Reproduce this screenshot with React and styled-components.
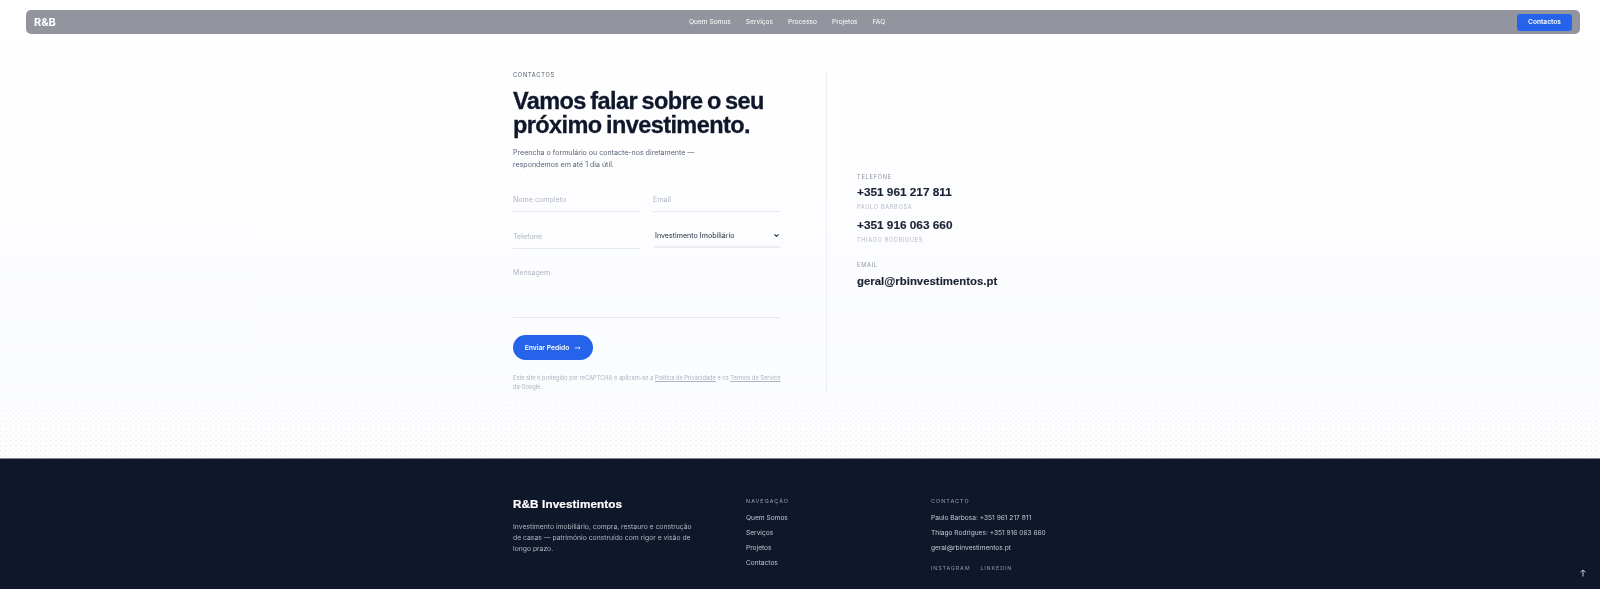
import styled, { createGlobalStyle } from "styled-components";
import { ChevronDown } from "lucide-react";

const GlobalStyle = createGlobalStyle`
  * { box-sizing: border-box; }
  html, body { margin: 0; padding: 0; background: #fff; }
  body { font-family: Inter, "Liberation Sans", sans-serif; color: #0f172a; }
`;

const Page = styled.div`
  position: relative;
  width: 100%;
  height: 589px;
  overflow: hidden;
  display: flex;
  flex-direction: column;
  filter: blur(0.3px);
`;

const Main = styled.main`
  position: relative;
  height: 458px;
  padding-top: 10px;
  background-color: #fff;
  background-image: linear-gradient(180deg, #fff 0%, #fbfcfe 80%, rgba(251, 252, 254, 0.25) 100%),
    radial-gradient(circle at 1px 1px, #e4e7ed 0.6px, transparent 0.9px),
    radial-gradient(circle at 3.5px 3.5px, #e9ecf1 0.6px, transparent 0.9px);
  background-size: 100% 100%, 5px 5px, 5px 5px;
`;

const Nav = styled.nav`
  position: relative;
  height: 24px;
  margin: 0 20px 0 26px;
  padding: 0 8px;
  display: flex;
  align-items: center;
  justify-content: space-between;
  background: #93959e;
  border-radius: 5px;
`;

const Logo = styled.span`
  font-size: 11px;
  font-weight: 700;
  color: #fff;
`;

const NavLinks = styled.div`
  position: absolute;
  left: 663px;
  display: flex;
  gap: 15px;
`;

const NavLink = styled.a`
  font-size: 6.6px;
  font-weight: 400;
  color: #fff;
`;

const NavButton = styled.button`
  width: 55px;
  height: 17px;
  padding: 0;
  border: none;
  border-radius: 3px;
  background: #2563eb;
  color: #fff;
  font-family: inherit;
  font-size: 6.6px;
  font-weight: 600;
`;

const Content = styled.div`
  width: 574px;
  margin: 36px auto 0 513px;
  display: flex;
`;

const FormCol = styled.section`
  width: 314px;
  height: 322px;
  padding: 2px 46px 0 0;
  border-right: 1px solid #eceef2;
`;

const Eyebrow = styled.div`
  font-size: 5.6px;
  font-weight: 400;
  letter-spacing: 0.14em;
  color: #4b5565;
  text-transform: uppercase;
`;

const Title = styled.h1`
  margin: 12px 0 0;
  font-family: "Liberation Sans", Arial, sans-serif;
  font-size: 23.5px;
  line-height: 23.5px;
  font-weight: 700;
  letter-spacing: -0.025em;
  word-spacing: -1.5px;
  -webkit-text-stroke: 0.3px #0f172a;
  color: #0f172a;
  white-space: nowrap;
`;

const Lead = styled.p`
  margin: 10px 0 0;
  width: 200px;
  font-size: 7.05px;
  line-height: 12px;
  color: #5b6478;
`;

const FormGrid = styled.form`
  margin-top: 17px;
  display: grid;
  grid-template-columns: 1fr 1fr;
  column-gap: 13px;
`;

const fieldBase = `
  width: 100%;
  border: none;
  outline: none;
  background: transparent;
  font-family: Inter, "Liberation Sans", sans-serif;
  font-size: 7.1px;
  color: #0f172a;
  border-bottom: 1px solid #e5e7eb;
  padding: 0;
  &::placeholder { color: #b0b5c3; opacity: 1; }
`;

const Input = styled.input`
  ${fieldBase}
  height: 24px;
  margin-bottom: 13px;
`;

const SelectWrap = styled.div`
  position: relative;
  height: 23px;
  margin-top: -3px;
  svg {
    position: absolute;
    right: 0;
    top: 10px;
    width: 7px;
    height: 7px;
    color: #1f2937;
    stroke-width: 3.5;
    pointer-events: none;
  }
`;

const Select = styled.select`
  ${fieldBase}
  height: 23px;
  padding-left: 2px;
  appearance: none;
  border-bottom: 2px solid #eceef2;
  color: #1f2937;
`;

const TextArea = styled.textarea`
  ${fieldBase}
  grid-column: 1 / -1;
  height: 57px;
  margin-top: -1px;
  padding-top: 7px;
  resize: none;
  display: block;
`;

const Submit = styled.button`
  margin-top: 17px;
  width: 80px;
  height: 25px;
  padding: 0;
  border: none;
  border-radius: 13px;
  background: #2563eb;
  color: #fff;
  font-family: inherit;
  font-size: 6.75px;
  font-weight: 600;
  display: flex;
  align-items: center;
  justify-content: center;
  gap: 5px;
`;

const Captcha = styled.p`
  margin: 14px 0 0;
  font-size: 5.66px;
  line-height: 9px;
  color: #aeb3c1;
  white-space: nowrap;

  a {
    color: inherit;
    text-decoration: underline;
  }
`;

const InfoCol = styled.aside`
  padding: 103px 0 0 30px;
`;

const InfoLabel = styled.div`
  font-size: 5.6px;
  font-weight: 400;
  letter-spacing: 0.14em;
  line-height: 8px;
  color: #8a91a1;
  text-transform: uppercase;
  margin-top: ${(p) => p.$top || 0}px;
`;

const InfoValue = styled.div`
  margin-top: ${(p) => p.$gap}px;
  font-family: "Liberation Sans", Arial, sans-serif;
  font-size: ${(p) => p.$size}px;
  line-height: 16px;
  font-weight: 700;
  -webkit-text-stroke: 0.15px #1a2236;
  color: #1a2236;
  white-space: nowrap;
`;

const InfoName = styled.div`
  margin: 3px 0 2px;
  font-size: 5.6px;
  line-height: 8px;
  letter-spacing: 0.12em;
  color: #b3b8c5;
  text-transform: uppercase;
`;

const Footer = styled.footer`
  height: 131px;
  background: #0f172a;
  border-top: 1px solid #7d828e;
`;

const FooterGrid = styled.div`
  width: 574px;
  margin-left: 513px;
  padding-top: 38px;
  display: flex;
`;

const FooterBrand = styled.div`
  width: 233px;
`;

const BrandName = styled.div`
  font-family: "Liberation Sans", Arial, sans-serif;
  font-size: 11.7px;
  line-height: 14px;
  font-weight: 700;
  letter-spacing: 0.01em;
  -webkit-text-stroke: 0.2px #fff;
  color: #fff;
`;

const BrandText = styled.p`
  margin: 10px 0 0;
  width: 180px;
  font-size: 6.8px;
  line-height: 11px;
  color: #aeb4c0;
`;

const FooterNav = styled.div`
  width: 185px;
`;

const FooterHead = styled.div`
  font-size: 5.4px;
  line-height: 8px;
  letter-spacing: 0.2em;
  color: #99a0ae;
  text-transform: uppercase;
`;

const FooterList = styled.div`
  margin-top: 8px;
  display: flex;
  flex-direction: column;
  gap: 4px;
`;

const FooterLink = styled.a`
  font-size: 6.6px;
  line-height: 11px;
  color: #c3c8d2;
  white-space: nowrap;
`;

const Socials = styled.div`
  margin-top: 10px;
  display: flex;
  gap: 10px;
`;

const Social = styled.a`
  font-size: 5.4px;
  line-height: 8px;
  letter-spacing: 0.16em;
  color: #8f96a5;
  text-transform: uppercase;
`;

const ToTop = styled.svg`
  position: absolute;
  right: 13px;
  bottom: 12px;
  width: 8px;
  height: 8px;
  color: #c3c8d2;
`;

const navItems = ["Quem Somos", "Serviços", "Processo", "Projetos", "FAQ"];
const footerNav = ["Quem Somos", "Serviços", "Projetos", "Contactos"];

export default function App() {
  return (
    <Page>
      <GlobalStyle />
      <Main>
        <Nav>
          <Logo>R&amp;B</Logo>
          <NavLinks>
            {navItems.map((item) => (
              <NavLink key={item}>{item}</NavLink>
            ))}
          </NavLinks>
          <NavButton>Contactos</NavButton>
        </Nav>
        <Content>
          <FormCol>
            <Eyebrow>Contactos</Eyebrow>
            <Title>
              Vamos falar sobre o seu
              <br />
              próximo investimento.
            </Title>
            <Lead>
              Preencha o formulário ou contacte-nos diretamente — respondemos em até 1 dia útil.
            </Lead>
            <FormGrid>
              <Input placeholder="Nome completo" />
              <Input placeholder="Email" />
              <Input placeholder="Telefone" />
              <SelectWrap>
                <Select defaultValue="Investimento Imobiliário">
                  <option>Investimento Imobiliário</option>
                </Select>
                <ChevronDown />
              </SelectWrap>
              <TextArea placeholder="Mensagem" />
            </FormGrid>
            <Submit type="button">
              Enviar Pedido
              <svg width="7" height="5" viewBox="0 0 8 6" fill="none" stroke="currentColor" strokeWidth="0.9">
                <path d="M0.5 3.5H7M5.5 2L7 3.5L5.5 5" />
              </svg>
            </Submit>
            <Captcha>
              Este site é protegido por reCAPTCHA e aplicam-se a <a>Política de Privacidade</a> e os{" "}
              <a>Termos de Service</a>
              <br />
              da Google.
            </Captcha>
          </FormCol>
          <InfoCol>
            <InfoLabel>Telefone</InfoLabel>
            <InfoValue $size={11.8} $gap={3}>+351 961 217 811</InfoValue>
            <InfoName>Paulo Barbosa</InfoName>
            <InfoValue $size={11.8} $gap={6}>+351 916 063 660</InfoValue>
            <InfoName>Thiago Rodrigues</InfoName>
            <InfoLabel $top={17}>Email</InfoLabel>
            <InfoValue $size={11.4} $gap={4}>geral@rbinvestimentos.pt</InfoValue>
          </InfoCol>
        </Content>
      </Main>
      <Footer>
        <FooterGrid>
          <FooterBrand>
            <BrandName>R&amp;B Investimentos</BrandName>
            <BrandText>
              Investimento imobiliário, compra, restauro e construção de casas — património construído com rigor e visão de longo prazo.
            </BrandText>
          </FooterBrand>
          <FooterNav>
            <FooterHead>Navegação</FooterHead>
            <FooterList>
              {footerNav.map((item) => (
                <FooterLink key={item}>{item}</FooterLink>
              ))}
            </FooterList>
          </FooterNav>
          <div>
            <FooterHead>Contacto</FooterHead>
            <FooterList>
              <FooterLink>Paulo Barbosa: +351 961 217 811</FooterLink>
              <FooterLink>Thiago Rodrigues: +351 916 063 660</FooterLink>
              <FooterLink>geral@rbinvestimentos.pt</FooterLink>
            </FooterList>
            <Socials>
              <Social>Instagram</Social>
              <Social>LinkedIn</Social>
            </Socials>
          </div>
        </FooterGrid>
      </Footer>
      <ToTop viewBox="0 0 8 8" fill="none" stroke="currentColor" strokeWidth="1">
        <path d="M4 7.5V1M1.5 3.2L4 1L6.5 3.2" />
      </ToTop>
    </Page>
  );
}
